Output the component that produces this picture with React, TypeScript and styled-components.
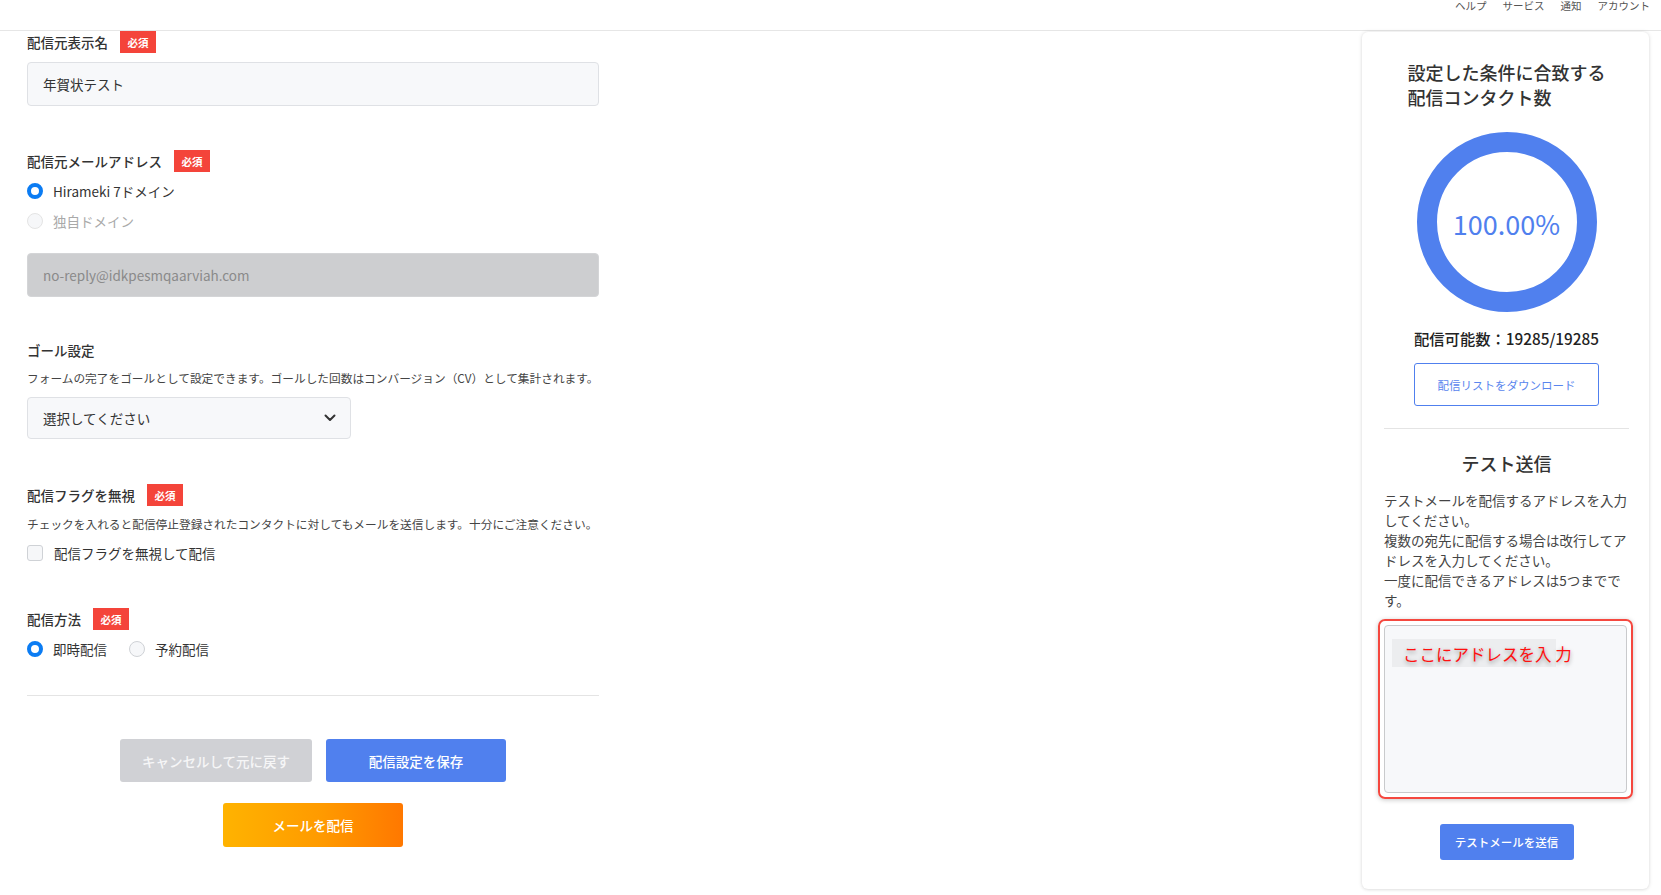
import React from "react";
import styled, { createGlobalStyle } from "styled-components";

const GlobalStyle = createGlobalStyle`
  html, body { margin: 0; padding: 0; background: #ffffff; }
  body {
    font-family: "Noto Sans CJK JP", "Noto Sans", sans-serif;
    color: #333333;
    -webkit-font-smoothing: antialiased;
  }
  * { box-sizing: border-box; }
`;

const Page = styled.div`
  width: 1661px;
  min-height: 895px;
  display: flex;
  flex-direction: column;
`;

const TopBar = styled.header`
  height: 31px;
  border-bottom: 1px solid #e6e6e6;
  display: flex;
  justify-content: flex-end;
  align-items: flex-start;
  gap: 16px;
  padding-right: 11px;
`;

const NavItem = styled.span`
  font-size: 10.5px;
  line-height: 12px;
  color: #555555;
`;

const Body = styled.div`
  display: flex;
  justify-content: space-between;
  align-items: flex-start;
  padding: 0 12px 0 27px;
`;

const FormColumn = styled.main`
  width: 572px;
  display: flex;
  flex-direction: column;
`;

const Group = styled.section<{ $mt: number }>`
  display: flex;
  flex-direction: column;
  margin-top: ${(p) => p.$mt}px;
`;

const LabelRow = styled.div`
  display: flex;
  align-items: center;
  height: 22px;
  gap: 12px;
`;

const Label = styled.span`
  font-size: 13.5px;
  font-weight: 500;
  color: #333333;
  line-height: 22px;
`;

const Badge = styled.span`
  width: 36px;
  height: 22px;
  background: #f4443a;
  color: #ffffff;
  font-size: 10.5px;
  font-weight: 700;
  display: inline-flex;
  align-items: center;
  justify-content: center;
`;

const TextInput = styled.input<{ $mt: number }>`
  margin-top: ${(p) => p.$mt}px;
  width: 100%;
  height: 44px;
  padding: 0 15px;
  border: 1px solid #dfe1e5;
  border-radius: 4px;
  background: #f7f8fa;
  font-family: inherit;
  font-size: 13.5px;
  color: #333333;
  outline: none;
  &:disabled {
    background: #cdced0;
    border-color: #d4d5d7;
    color: #8a8a8a;
  }
`;

const Description = styled.p<{ $mt: number }>`
  margin: ${(p) => p.$mt}px 0 0;
  font-size: 11.7px;
  line-height: 18px;
  color: #444444;
  white-space: nowrap;
`;

const OptionRow = styled.div<{ $mt: number }>`
  display: flex;
  align-items: center;
  height: 22px;
  margin-top: ${(p) => p.$mt}px;
  gap: 22px;
`;

const Option = styled.label<{ $disabled?: boolean }>`
  display: inline-flex;
  align-items: center;
  gap: 10px;
  font-size: 13.5px;
  color: ${(p) => (p.$disabled ? "#a9a9a9" : "#333333")};
`;

const Radio = styled.span<{ $checked?: boolean; $disabled?: boolean }>`
  width: 16px;
  height: 16px;
  border-radius: 50%;
  flex: none;
  background: #ffffff;
  border: ${(p) =>
    p.$checked ? "4px solid #0b7cf3" : p.$disabled ? "1px solid #e4e4e4" : "1px solid #cfd2d6"};
  ${(p) => (!p.$checked ? "background: #f6f7f9;" : "")}
`;

const Checkbox = styled.span`
  width: 16px;
  height: 16px;
  flex: none;
  border-radius: 3px;
  border: 1px solid #cfd2d6;
  background: #f6f7f9;
  margin-right: 1px;
`;

const SelectBox = styled.div<{ $mt: number }>`
  margin-top: ${(p) => p.$mt}px;
  width: 324px;
  height: 42px;
  border: 1px solid #dfe1e5;
  border-radius: 4px;
  background: #f7f8fa;
  display: flex;
  align-items: center;
  justify-content: space-between;
  padding: 0 14px 0 15px;
  font-size: 13.5px;
  color: #333333;
`;

const Divider = styled.hr<{ $mt: number }>`
  margin: ${(p) => p.$mt}px 0 0;
  border: none;
  border-top: 1px solid #e4e4e4;
  width: 100%;
`;

const ButtonRow = styled.div<{ $mt: number }>`
  display: flex;
  justify-content: center;
  gap: 14px;
  margin-top: ${(p) => p.$mt}px;
`;

const ActionButton = styled.button<{ $variant: "cancel" | "save" | "send"; $w: number; $h: number }>`
  width: ${(p) => p.$w}px;
  height: ${(p) => p.$h}px;
  border: none;
  border-radius: 3px;
  font-family: inherit;
  font-size: 13.5px;
  font-weight: 500;
  color: ${(p) => (p.$variant === "cancel" ? "#f6f6f7" : "#ffffff")};
  background: ${(p) =>
    p.$variant === "cancel"
      ? "#d0d1d5"
      : p.$variant === "save"
      ? "#5080ee"
      : "linear-gradient(90deg, #ffb300 0%, #ff9a00 55%, #ff7800 100%)"};
`;

const SideCard = styled.aside`
  width: 287px;
  margin-top: 1px;
  background: #ffffff;
  border-radius: 6px;
  box-shadow: 0 0 4px rgba(0, 0, 0, 0.12), 0 1px 3px rgba(0, 0, 0, 0.06);
  padding: 28px 20px 29px 22px;
  display: flex;
  flex-direction: column;
  align-items: center;
`;

const CardTitle = styled.h2`
  margin: 0;
  font-size: 18px;
  font-weight: 500;
  line-height: 25px;
  color: #333333;
  text-align: left;
  width: fit-content;
`;

const DonutWrap = styled.div`
  position: relative;
  width: 180px;
  height: 180px;
  margin-top: 22px;
`;

const DonutLabel = styled.div`
  position: absolute;
  inset: 0;
  display: flex;
  align-items: center;
  justify-content: center;
  font-size: 27px;
  color: #5080ee;
  padding-top: 2px;
`;

const CountText = styled.div`
  margin-top: 14px;
  font-size: 15.3px;
  font-weight: 500;
  line-height: 24px;
  color: #222222;
`;

const OutlineButton = styled.button`
  margin-top: 13px;
  width: 185px;
  height: 43px;
  border: 1px solid #5080ee;
  border-radius: 3px;
  background: #ffffff;
  color: #5a86ee;
  font-family: inherit;
  font-size: 11.5px;
`;

const CardDivider = styled.hr`
  margin: 22px 0 0;
  width: 100%;
  border: none;
  border-top: 1px solid #e4e4e4;
`;

const SubTitle = styled.h3`
  margin: 21px 0 0;
  font-size: 18px;
  font-weight: 500;
  line-height: 26px;
  color: #333333;
`;

const Paragraph = styled.p`
  margin: 14px 0 0;
  width: 100%;
  font-size: 13.5px;
  line-height: 20px;
  color: #444444;
`;

const HighlightFrame = styled.div`
  position: relative;
  margin-top: 9px;
  width: calc(100% + 10px);
  align-self: stretch;
  margin-left: -6px;
  padding: 4px;
  border: 2px solid #f5483f;
  border-radius: 7px;
  box-shadow: 0 1px 5px rgba(0, 0, 0, 0.22);
`;

const AddressArea = styled.textarea`
  display: block;
  width: 100%;
  height: 168px;
  border: 1px solid #c9cacc;
  border-radius: 4px;
  background: #f7f8fa;
  resize: none;
  outline: none;
  font-family: inherit;
  font-size: 13px;
`;

const Annotation = styled.span`
  position: absolute;
  left: 12px;
  top: 18px;
  width: 164px;
  height: 28px;
  padding-left: 11px;
  background: rgba(0, 0, 0, 0.045);
  color: #ff1010;
  font-size: 16.5px;
  line-height: 30px;
  white-space: nowrap;
  text-shadow: 0 2px 4px rgba(0, 0, 0, 0.4);
  pointer-events: none;
`;

const SendTestButton = styled.button`
  margin-top: 25px;
  width: 134px;
  height: 36px;
  border: none;
  border-radius: 3px;
  background: #5080ee;
  color: #ffffff;
  font-family: inherit;
  font-size: 11.5px;
  font-weight: 500;
`;

const Chevron = () => (
  <svg width="12" height="8" viewBox="0 0 12 8" aria-hidden>
    <path d="M1.5 1.5 L6 6 L10.5 1.5" fill="none" stroke="#333" strokeWidth="2" strokeLinecap="round" strokeLinejoin="round" />
  </svg>
);

const Donut = () => (
  <svg width="180" height="180" viewBox="0 0 180 180" aria-hidden>
    <circle cx="90" cy="90" r="80" fill="none" stroke="#5080ee" strokeWidth="20" />
  </svg>
);

export default function App() {
  return (
    <>
      <GlobalStyle />
      <Page>
        <TopBar>
          <NavItem>ヘルプ</NavItem>
          <NavItem>サービス</NavItem>
          <NavItem>通知</NavItem>
          <NavItem>アカウント</NavItem>
        </TopBar>
        <Body>
          <FormColumn>
            <Group $mt={0}>
              <LabelRow>
                <Label>配信元表示名</Label>
                <Badge>必須</Badge>
              </LabelRow>
              <TextInput $mt={9} defaultValue="年賀状テスト" />
            </Group>

            <Group $mt={44}>
              <LabelRow>
                <Label>配信元メールアドレス</Label>
                <Badge>必須</Badge>
              </LabelRow>
              <OptionRow $mt={8}>
                <Option>
                  <Radio $checked />
                  Hirameki 7ドメイン
                </Option>
              </OptionRow>
              <OptionRow $mt={8}>
                <Option $disabled>
                  <Radio $disabled />
                  独自ドメイン
                </Option>
              </OptionRow>
              <TextInput $mt={21} disabled defaultValue="no-reply@idkpesmqaarviah.com" />
            </Group>

            <Group $mt={42}>
              <LabelRow>
                <Label>ゴール設定</Label>
              </LabelRow>
              <Description $mt={8}>
                フォームの完了をゴールとして設定できます。ゴールした回数はコンバージョン（CV）として集計されます。
              </Description>
              <SelectBox $mt={10}>
                <span>選択してください</span>
                <Chevron />
              </SelectBox>
            </Group>

            <Group $mt={45}>
              <LabelRow>
                <Label>配信フラグを無視</Label>
                <Badge>必須</Badge>
              </LabelRow>
              <Description $mt={9}>
                チェックを入れると配信停止登録されたコンタクトに対してもメールを送信します。十分にご注意ください。
              </Description>
              <OptionRow $mt={9}>
                <Option>
                  <Checkbox />
                  配信フラグを無視して配信
                </Option>
              </OptionRow>
            </Group>

            <Group $mt={44}>
              <LabelRow>
                <Label>配信方法</Label>
                <Badge>必須</Badge>
              </LabelRow>
              <OptionRow $mt={8}>
                <Option>
                  <Radio $checked />
                  即時配信
                </Option>
                <Option>
                  <Radio />
                  予約配信
                </Option>
              </OptionRow>
            </Group>

            <Divider $mt={35} />

            <ButtonRow $mt={43}>
              <ActionButton $variant="cancel" $w={192} $h={43}>
                キャンセルして元に戻す
              </ActionButton>
              <ActionButton $variant="save" $w={180} $h={43}>
                配信設定を保存
              </ActionButton>
            </ButtonRow>
            <ButtonRow $mt={21}>
              <ActionButton $variant="send" $w={180} $h={44}>
                メールを配信
              </ActionButton>
            </ButtonRow>
          </FormColumn>

          <SideCard>
            <CardTitle>
              設定した条件に合致する
              <br />
              配信コンタクト数
            </CardTitle>
            <DonutWrap>
              <Donut />
              <DonutLabel>100.00%</DonutLabel>
            </DonutWrap>
            <CountText>配信可能数：19285/19285</CountText>
            <OutlineButton>配信リストをダウンロード</OutlineButton>
            <CardDivider />
            <SubTitle>テスト送信</SubTitle>
            <Paragraph>
              テストメールを配信するアドレスを入力してください。
              <br />
              複数の宛先に配信する場合は改行してアドレスを入力してください。
              <br />
              一度に配信できるアドレスは5つまでです。
            </Paragraph>
            <HighlightFrame>
              <AddressArea />
              <Annotation>ここにアドレスを入 力</Annotation>
            </HighlightFrame>
            <SendTestButton>テストメールを送信</SendTestButton>
          </SideCard>
        </Body>
      </Page>
    </>
  );
}
